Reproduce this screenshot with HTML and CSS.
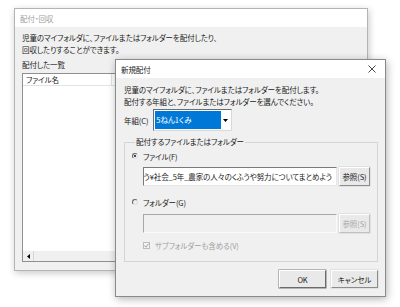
FILE: index.html
```html
<!DOCTYPE html>
<html lang="ja">
  <head>
    <meta charset="UTF-8" />
    <title>配付・回収</title>
    <link rel="stylesheet" href="styles.css">
  </head>
  <body>
    <div class="desktop">
      <div class="window main-window">
        <div class="titlebar">
          <span class="title muted">配付・回収</span>
        </div>
        <div class="window-body">
          <p class="msg">児童のマイフォルダに、ファイルまたはフォルダーを配付したり、<br>回収したりすることができます。</p>
          <p class="label">配付した一覧</p>
          <div class="listbox">
            <div class="list-head">
              <span class="col col-name">ファイル名</span>
              <span class="col"></span>
            </div>
            <div class="list-rows"></div>
            <div class="hscroll">
              <span class="scroll-btn">
                <svg width="3" height="5" viewBox="0 0 3 5"><path d="M3 0 L0 2.5 L3 5 Z" fill="#000"/></svg>
              </span>
            </div>
          </div>
        </div>
      </div>

      <div class="window dialog">
        <div class="titlebar">
          <span class="title">新規配付</span>
          <svg class="close" width="8" height="8" viewBox="0 0 8 8"><path d="M0.5 0.5 L7.5 7.5 M7.5 0.5 L0.5 7.5" stroke="#333" stroke-width="0.9"/></svg>
        </div>
        <div class="dialog-body">
          <p class="msg">児童のマイフォルダに、ファイルまたはフォルダーを配付します。<br>配付する年組と、ファイルまたはフォルダーを選んでください。</p>
          <div class="year-row">
            <span class="year-label">年組(C)</span>
            <div class="combo">
              <span class="combo-value">5ねん1くみ</span>
              <span class="combo-btn">
                <svg width="5" height="3" viewBox="0 0 5 3"><path d="M0 0 L5 0 L2.5 3 Z" fill="#000"/></svg>
              </span>
            </div>
          </div>

          <fieldset class="group">
            <legend>配付するファイルまたはフォルダー</legend>
            <div class="opt-row">
              <span class="radio checked"></span>
              <span>ファイル(F)</span>
            </div>
            <div class="path-row">
              <div class="textbox"><span class="path-text">こう¥社会_5年_農家の人々のくふうや努力についてまとめよう</span></div>
              <button class="btn small">参照(S)</button>
            </div>
            <div class="opt-row">
              <span class="radio"></span>
              <span>フォルダー(G)</span>
            </div>
            <div class="path-row">
              <div class="textbox disabled"></div>
              <button class="btn small disabled">参照(S)</button>
            </div>
            <div class="check-row">
              <span class="checkbox">
                <svg width="5" height="5" viewBox="0 0 5 5"><path d="M0.4 2.5 L1.9 4.2 L4.6 0.6" stroke="#a0a0a0" stroke-width="1" fill="none"/></svg>
              </span>
              <span class="muted">サブフォルダーも含める(V)</span>
            </div>
          </fieldset>

          <div class="actions">
            <button class="btn ok">OK</button>
            <button class="btn">キャンセル</button>
          </div>
        </div>
      </div>
    </div>
  </body>
</html>
```

FILE: styles.css
```css
* {
  margin: 0;
  padding: 0;
  box-sizing: border-box;
}

body {
  background: #fff;
  font-family: "Noto Sans CJK JP", "Noto Sans", sans-serif;
  font-size: 7.5px;
  font-feature-settings: "palt";
  letter-spacing: -0.1px;
  color: #1a1a1a;
}

.desktop {
  position: relative;
  width: 400px;
  height: 307px;
  overflow: hidden;
}

.window {
  position: absolute;
  background: #f0f0f0;
  display: flex;
  flex-direction: column;
}

.main-window {
  left: 14px;
  top: 8px;
  width: 354px;
  height: 263px;
  border: 1px solid #b4b4b4;
  box-shadow: 1px 2px 7px rgba(0, 0, 0, 0.22);
}

.dialog {
  left: 115px;
  top: 59px;
  width: 271px;
  height: 238px;
  border: 1px solid #8a8a8a;
  box-shadow: 1px 2px 8px rgba(0, 0, 0, 0.3);
}

.titlebar {
  height: 18px;
  background: #fff;
  display: flex;
  align-items: center;
  justify-content: space-between;
  padding: 0 9px 0 5px;
}

.muted {
  color: #a0a0a0;
}

.msg {
  line-height: 12px;
}

/* main window */
.window-body {
  flex: 1;
  display: flex;
  flex-direction: column;
  padding: 5px 7px 8px 7px;
}

.label {
  line-height: 12px;
  margin-top: 3px;
}

.listbox {
  margin-top: 2px;
  flex: 1;
  background: #fff;
  border: 1px solid #8f8f8f;
  display: flex;
  flex-direction: column;
}

.list-head {
  height: 12px;
  display: flex;
  border-bottom: 1px solid #e3e3e3;
}

.col {
  flex: 1;
  line-height: 11px;
  padding-left: 3px;
}

.col-name {
  flex: 0 0 89px;
  border-right: 1px solid #e3e3e3;
}

.list-rows {
  flex: 1;
}

.hscroll {
  height: 10px;
  background: #f0f0f0;
  display: flex;
}

.scroll-btn {
  width: 11px;
  display: flex;
  align-items: center;
  justify-content: center;
  border-right: 1px solid #d6d6d6;
}

/* dialog */
.dialog-body {
  flex: 1;
  padding: 6px 7px 0 8px;
}

.year-row {
  display: flex;
  align-items: center;
  margin-top: 1px;
  gap: 5px;
}

.combo {
  width: 79px;
  height: 22px;
  border: 1px solid;
  border-color: #6d6d6d #d8d8d8 #d8d8d8 #6d6d6d;
  background: #fff;
  display: flex;
  padding: 1px;
}

.combo-value {
  flex: 1;
  background: #0078d7;
  color: #fff;
  line-height: 18px;
  padding-left: 1px;
}

.combo-btn {
  width: 9px;
  display: flex;
  align-items: center;
  justify-content: center;
}

.group {
  margin-top: 5px;
  height: 126px;
  border: 1px solid #d5d5d5;
  padding: 0 5px 0 7px;
}

.group legend {
  line-height: 12px;
  padding: 0 1px;
  margin-left: 3px;
}

.opt-row,
.check-row {
  display: flex;
  align-items: center;
  height: 12px;
  gap: 5px;
  margin-top: 2px;
}

.path-row + .opt-row {
  margin-top: 10px;
}

.radio {
  width: 6px;
  height: 6px;
  border-radius: 50%;
  border: 1px solid;
  border-color: #666 #e0e0e0 #e0e0e0 #666;
  display: flex;
  align-items: center;
  justify-content: center;
}

.radio.checked::after {
  content: "";
  width: 2px;
  height: 2px;
  border-radius: 50%;
  background: #111;
}

.path-row {
  display: flex;
  gap: 2px;
  margin-top: 5px;
  margin-left: 11px;
}

.opt-row + .path-row + .opt-row + .path-row {
  margin-top: 6px;
}

.textbox {
  width: 194px;
  height: 19px;
  background: #fff;
  border: 1px solid;
  border-color: #7a7a7a #e6e6e6 #e6e6e6 #7a7a7a;
  overflow: hidden;
  display: flex;
  justify-content: flex-end;
  align-items: center;
  padding-right: 4px;
}

.textbox.disabled {
  background: #f0f0f0;
  border-color: #a8a8a8 #fafafa #fafafa #a8a8a8;
}

.path-text {
  white-space: nowrap;
}

.btn {
  font-family: inherit;
  font-size: 7.5px;
  font-feature-settings: "palt";
  letter-spacing: -0.1px;
  color: #1a1a1a;
  background: #e9e9e9;
  border: 1px solid;
  border-color: #fff #8c8c8c #8c8c8c #fff;
  box-shadow: 0 0 0 0.5px #d0d0d0;
  height: 18px;
  width: 47px;
}

.btn.small {
  width: 31px;
  height: 19px;
}

.btn.disabled {
  color: #a8a8a8;
  border-color: #fff #c0c0c0 #c0c0c0 #fff;
}

.check-row {
  margin-top: 6px;
  margin-left: 11px;
}

.checkbox {
  width: 7px;
  height: 7px;
  border: 1px solid #bcbcbc;
  background: #f4f4f4;
  display: flex;
  align-items: center;
  justify-content: center;
}

.actions {
  display: flex;
  justify-content: flex-end;
  gap: 5px;
  margin-top: 8px;
}

.btn.ok {
  border-color: #fff #6a6a6a #6a6a6a #fff;
  box-shadow: 0 0 0 0.5px #777;
}
```
